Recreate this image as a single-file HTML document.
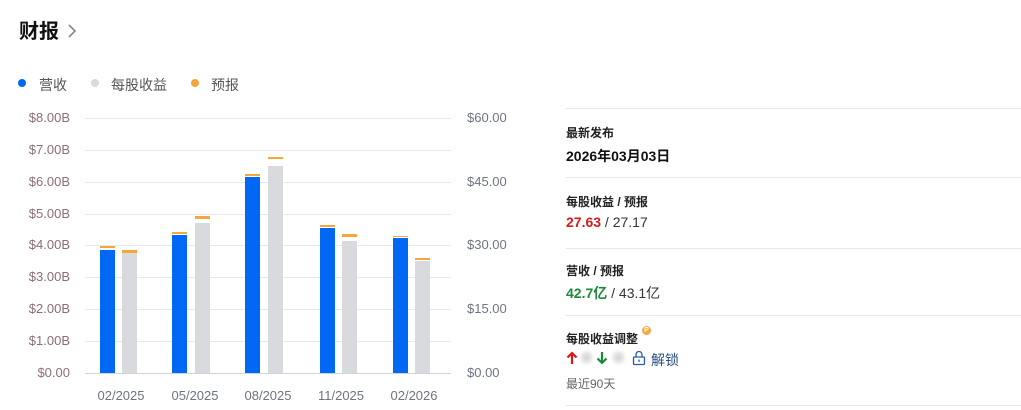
<!DOCTYPE html>
<html><head><meta charset="utf-8"><style>
body{margin:0;width:1021px;height:410px;background:#fff;font-family:"Liberation Sans","Noto Sans CJK SC",sans-serif;position:relative;overflow:hidden}
.a{position:absolute;white-space:nowrap}
.yl{font-size:13px;color:#8a6f78;text-align:right;width:70px;left:0}
.yr{font-size:13px;color:#6f7480;left:467px}
.xl{font-size:13px;color:#6f7480;width:70px;text-align:center}
.g{position:absolute;left:85px;width:366px;height:1px;background:#e6e8ec}
.b{position:absolute;width:15px}
.o{position:absolute;width:15px;height:2px;background:#f5a73b}
.hr{position:absolute;left:566px;width:455px;height:1px;background:#e6e8ec}
.lab{font-size:12px;font-weight:bold;color:#222}
</style></head><body>
<div class="a" style="left:19px;top:15px;font-size:20px;font-weight:bold;color:#111">财报</div>
<svg class="a" style="left:67px;top:24px" width="10" height="14" viewBox="0 0 10 14"><path d="M2 1l6 6-6 6" fill="none" stroke="#888" stroke-width="1.6"/></svg>
<div class="a" style="left:18px;top:79px;width:8px;height:8px;border-radius:50%;background:#0068f5"></div>
<div class="a" style="left:39px;top:75px;font-size:14px;color:#555">营收</div>
<div class="a" style="left:91px;top:79px;width:8px;height:8px;border-radius:50%;background:#d8dadd"></div>
<div class="a" style="left:111px;top:75px;font-size:14px;color:#555">每股收益</div>
<div class="a" style="left:191px;top:79px;width:8px;height:8px;border-radius:50%;background:#f5a73b"></div>
<div class="a" style="left:211px;top:75px;font-size:14px;color:#555">预报</div>

<div class="g" style="top:118px"></div><div class="g" style="top:150px"></div><div class="g" style="top:182px"></div><div class="g" style="top:214px"></div><div class="g" style="top:245px"></div><div class="g" style="top:277px"></div><div class="g" style="top:309px"></div><div class="g" style="top:341px"></div><div class="g" style="top:373px;background:#cfd3da"></div>
<div class="a yl" style="top:110px">$8.00B</div><div class="a yl" style="top:142px">$7.00B</div><div class="a yl" style="top:174px">$6.00B</div><div class="a yl" style="top:206px">$5.00B</div><div class="a yl" style="top:237px">$4.00B</div><div class="a yl" style="top:269px">$3.00B</div><div class="a yl" style="top:301px">$2.00B</div><div class="a yl" style="top:333px">$1.00B</div><div class="a yl" style="top:365px">$0.00</div>
<div class="a yr" style="top:110px">$60.00</div><div class="a yr" style="top:174px">$45.00</div><div class="a yr" style="top:237px">$30.00</div><div class="a yr" style="top:301px">$15.00</div><div class="a yr" style="top:365px">$0.00</div>

<div class="b" style="left:100px;top:250px;height:123px;background:#0068f5"></div><div class="o" style="left:100px;top:246px"></div>
<div class="b" style="left:122px;top:253px;height:120px;background:#d8dadd"></div><div class="o" style="left:122px;top:250px;height:3px"></div>
<div class="b" style="left:172px;top:235px;height:138px;background:#0068f5"></div><div class="o" style="left:172px;top:232px"></div>
<div class="b" style="left:195px;top:223px;height:150px;background:#d8dadd"></div><div class="o" style="left:195px;top:216px;height:3px"></div>
<div class="b" style="left:245px;top:177px;height:196px;background:#0068f5"></div><div class="o" style="left:245px;top:174px"></div>
<div class="b" style="left:268px;top:166px;height:207px;background:#d8dadd"></div><div class="o" style="left:268px;top:157px"></div>
<div class="b" style="left:320px;top:228px;height:145px;background:#0068f5"></div><div class="o" style="left:320px;top:225px"></div>
<div class="b" style="left:342px;top:241px;height:132px;background:#d8dadd"></div><div class="o" style="left:342px;top:234px;height:3px"></div>
<div class="b" style="left:393px;top:238px;height:135px;background:#0068f5"></div><div class="o" style="left:393px;top:236px;height:1px"></div>
<div class="b" style="left:415px;top:261px;height:112px;background:#d8dadd"></div><div class="o" style="left:415px;top:258px"></div>

<div class="a xl" style="left:86px;top:388px">02/2025</div><div class="a xl" style="left:160px;top:388px">05/2025</div><div class="a xl" style="left:233px;top:388px">08/2025</div><div class="a xl" style="left:306px;top:388px">11/2025</div><div class="a xl" style="left:379px;top:388px">02/2026</div>

<div class="hr" style="top:108px"></div><div class="hr" style="top:177px"></div><div class="hr" style="top:248px"></div><div class="hr" style="top:315px"></div><div class="hr" style="top:405px"></div>
<div class="a lab" style="left:566px;top:124px">最新发布</div>
<div class="a" style="left:566px;top:146px;font-size:14px;font-weight:bold;color:#111">2026年03月03日</div>
<div class="a lab" style="left:566px;top:193px">每股收益 / 预报</div>
<div class="a" style="left:566px;top:214px;font-size:14px;color:#333"><b style="color:#d71a1a">27.63</b> / 27.17</div>
<div class="a lab" style="left:566px;top:262px">营收 / 预报</div>
<div class="a" style="left:566px;top:283px;font-size:14px;color:#333"><b style="color:#1b8a3a">42.7亿</b> / 43.1亿</div>
<div class="a lab" style="left:566px;top:330px">每股收益调整</div>
<div class="a" style="left:642px;top:326px;width:9px;height:9px;border-radius:50%;background:#f5a73b;color:#fff;font-size:7px;text-align:center;line-height:9px;font-weight:bold">P</div>
<svg class="a" style="left:566px;top:351px" width="12" height="14" viewBox="0 0 12 14"><path d="M6 13V2M1.5 6.5L6 2l4.5 4.5" fill="none" stroke="#d71a1a" stroke-width="2.2"/></svg>
<div class="a" style="left:581px;top:352px;width:11px;height:11px;border-radius:50%;background:#d8d8d8;filter:blur(2px)"></div>
<svg class="a" style="left:596px;top:351px" width="12" height="14" viewBox="0 0 12 14"><path d="M6 1v11M1.5 7.5L6 12l4.5-4.5" fill="none" stroke="#1b8a3a" stroke-width="2.2"/></svg>
<div class="a" style="left:613px;top:352px;width:11px;height:11px;border-radius:50%;background:#d8d8d8;filter:blur(2px)"></div>
<svg class="a" style="left:632px;top:350px" width="14" height="16" viewBox="0 0 14 16"><path d="M4 7V4.5a3 3 0 0 1 6 0V7" fill="none" stroke="#2a5ba8" stroke-width="1.3"/><rect x="1.5" y="7" width="11" height="7.5" rx="1" fill="none" stroke="#2a5ba8" stroke-width="1.3"/><path d="M7 9.5v2.5" stroke="#2a5ba8" stroke-width="1.3"/></svg>
<div class="a" style="left:651px;top:350px;font-size:14px;color:#2a4f8a">解锁</div>
<div class="a" style="left:566px;top:375px;font-size:12px;color:#666">最近90天</div>
</body></html>
